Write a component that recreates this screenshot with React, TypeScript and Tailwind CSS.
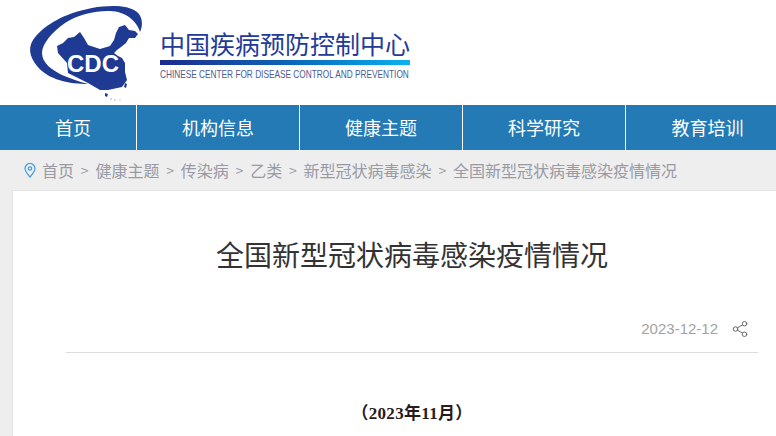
import { Share2 } from 'lucide-react';

const navItems = ['机构信息', '健康主题', '科学研究', '教育培训'];
const crumbs = ['首页', '健康主题', '传染病', '乙类', '新型冠状病毒感染', '全国新型冠状病毒感染疫情情况'];

function Logo() {
  return (
    <svg width="145" height="105" viewBox="0 0 145 105" className="shrink-0">
      {/* swoosh */}
      <path
        d="M88 84C70 84 48 80 37 66C29 56 27 46 36 36C46 25 62 14 92 8C110 5 128 5 137 12C143 17 143 26 140 32C138 24 130 15 118 12C104 9 80 13 65 23C52 32 42 44 42 53C42 63 52 70 62 75C70 78 80 82 88 84Z"
        fill="#1f3a93"
      />
      {/* map */}
      <path
        d="M57 46L63 43L68 38L74 37L80 32L84 38L88 45L100 49L110 46L114 40L116 33L119 27L125 25L129 30L135 31L138 34L135 38L129 38L126 43L121 47L117 50L114 53L118 56L122 58L125 63L125 72L127 80L122 87L108 90L100 90L88 83L82 80L68 73L67 63L58 53Z"
        fill="#1f3a93"
      />
      <path d="M105 93L108 94L107 97L105 96Z" fill="#1f3a93" />
      <path d="M125 83L127 84L126 88L124 87Z" fill="#1f3a93" />
      <circle cx="111" cy="99" r="1" fill="#c5cbe0" />
      <circle cx="115" cy="100" r="1" fill="#c5cbe0" />
      <circle cx="120" cy="100" r="0.8" fill="#c5cbe0" />
      <text x="67" y="72" fill="#fff" fontSize="24" fontWeight="700" fontFamily="'Liberation Sans', sans-serif">
        CDC
      </text>
    </svg>
  );
}

export default function App() {
  return (
    <div className="w-[776px] h-[436px] overflow-hidden bg-[#eeeeee] font-['Noto_Sans_CJK_SC','Noto_Sans',sans-serif]">
      <header className="h-[105px] bg-white flex">
        <Logo />
        <div className="ml-[15px] pt-[26px] w-[250px]">
          <div className="text-[25px] leading-[34px] text-[#233a99] whitespace-nowrap">中国疾病预防控制中心</div>
          <div className="h-[5px] bg-gradient-to-r from-[#1b2a8c] via-[#0a63b5] to-[#0db2ee]" />
          <div className="mt-[3px] text-[11px] leading-[12px] text-[#4a5a90] whitespace-nowrap origin-left scale-x-[0.752] font-['Liberation_Sans',sans-serif]">
            CHINESE CENTER FOR DISEASE CONTROL AND PREVENTION
          </div>
        </div>
      </header>

      <nav className="h-[45px] bg-[#237ab5] flex text-white text-[18px] leading-[45px] whitespace-nowrap">
        <a className="w-[137px] shrink-0 pl-[55px] border-r border-white">首页</a>
        {navItems.map((item) => (
          <a key={item} className="w-[163px] shrink-0 text-center border-r border-white last:border-r-0">
            {item}
          </a>
        ))}
      </nav>

      <div className="h-[40px] flex items-center pl-[24px] text-[16px] text-[#999aa5] whitespace-nowrap">
        <svg width="12" height="15" viewBox="0 0 12 15" fill="none" stroke="#3f9be0" strokeWidth="1.2" className="mr-[6px] shrink-0">
          <path d="M6 14C3 10.5 1 8 1 5.5a5 5 0 0 1 10 0C11 8 9 10.5 6 14Z" />
          <circle cx="6" cy="5.5" r="1.7" />
        </svg>
        {crumbs.map((crumb, i) => (
          <span key={crumb} className="flex items-center">
            {i > 0 && <span className="mx-[6.8px] text-[14px]">&gt;</span>}
            {crumb}
          </span>
        ))}
      </div>

      <main className="ml-[12px] w-[800px] h-[300px] bg-white border border-[#e4e4e4] px-[53px]">
        <h1 className="pt-[43px] text-center text-[28px] leading-[40px] text-[#333333]">全国新型冠状病毒感染疫情情况</h1>
        <div className="mt-[45px] h-[34px] border-b border-[#dddddd] flex justify-end items-start pr-[9px]">
          <span className="text-[15px] leading-[20px] text-[#a3a3a3] font-['Liberation_Sans',sans-serif]">2023-12-12</span>
          <Share2 className="ml-[13px] mt-[1px] w-[18px] h-[18px] text-[#666666]" strokeWidth={1.3} />
        </div>
        <p className="mt-[51px] text-center text-[17px] leading-[20px] tracking-[0.3px] font-bold text-[#2a1a1a] font-['Liberation_Serif','Noto_Sans_CJK_SC',serif]">
          （2023年11月）
        </p>
      </main>
    </div>
  );
}
